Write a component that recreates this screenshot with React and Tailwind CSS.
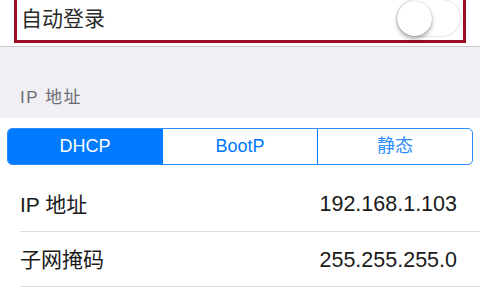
export default function App() {
  const latin = { fontFamily: '"Liberation Sans", "Noto Sans CJK SC", sans-serif' };
  return (
    <div className="w-[480px] h-[300px] overflow-hidden bg-white" style={latin}>
      <div className="h-[47px] bg-white border-b border-[#c8c7cc]">
        <div className="mx-[14px] h-[43px] border-x-[3px] border-b-[3px] border-[#9b0d25] flex items-start justify-between">
          <span className="pl-[4px] pt-[5px] text-[21px] leading-[28px] text-[#2a2a2a]">自动登录</span>
          <div className="-mt-[1px] mr-[2px] w-[65px] h-[38px] rounded-full border-[1.5px] border-[#e5e5e5] bg-white relative">
            <div className="absolute left-0 top-[1px] w-[35px] h-[35px] rounded-full bg-white shadow-[0_3px_4px_rgba(0,0,0,0.3),0_0_1px_rgba(0,0,0,0.35)]"></div>
          </div>
        </div>
      </div>
      <div className="h-[71px] bg-[#efeff4] flex items-end pb-[10px] pl-[20px]">
        <span className="text-[17px] leading-[20px] text-[#6d6d72] tracking-[1.5px]">IP 地址</span>
      </div>
      <div className="bg-white">
        <div className="pt-[10px] px-[7px]">
          <div className="flex h-[37px] border border-[#2f8cff] rounded-[5px] overflow-hidden text-[18px]">
            <div className="flex-1 flex items-center justify-center bg-[#007aff] text-white">DHCP</div>
            <div className="flex-1 flex items-center justify-center text-[#007aff] border-l border-[#007aff]">BootP</div>
            <div className="flex-1 flex items-center justify-center text-[#2f8cff] border-l border-[#007aff]">静态</div>
          </div>
        </div>
        <div className="pl-[20px] mt-[11px]">
          <div className="h-[56px] border-b border-[#dcdce0] flex items-center justify-between pr-[23px] pt-[2px] text-[21px] text-[#1a1a1a]">
            <span>IP 地址</span>
            <span className="text-[21.5px]">192.168.1.103</span>
          </div>
          <div className="h-[55px] border-b border-[#dcdce0] flex items-center justify-between pr-[23px] pt-[2px] text-[21px] text-[#1a1a1a]">
            <span>子网掩码</span>
            <span className="text-[21.5px]">255.255.255.0</span>
          </div>
        </div>
      </div>
    </div>
  );
}
